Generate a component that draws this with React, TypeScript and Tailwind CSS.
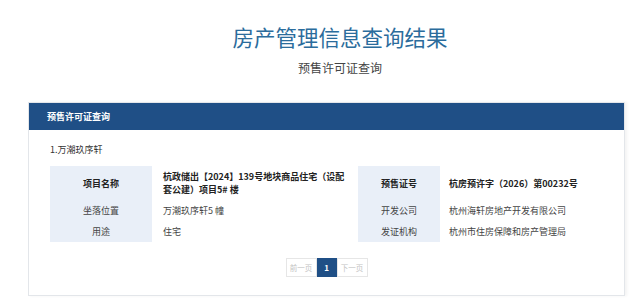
const font = { fontFamily: '"Noto Sans CJK SC", "Noto Sans", sans-serif' };

const rows = [
  {
    l: '项目名称',
    lv: (
      <>
        杭政储出【2024】139号地块商品住宅（设配
        <br />
        套公建）项目5# 楼
      </>
    ),
    r: '预售证号',
    rv: '杭房预许字（2026）第00232号',
    bold: true,
  },
  { l: '坐落位置', lv: '万潮玖序轩5 幢', r: '开发公司', rv: '杭州海轩房地产开发有限公司', bold: false },
  { l: '用途', lv: '住宅', r: '发证机构', rv: '杭州市住房保障和房产管理局', bold: false },
];

function Label({ children, bold }: { children: React.ReactNode; bold?: boolean }) {
  return (
    <div className={`flex items-center justify-center bg-[#e9eff8] py-[4px] ${bold ? 'font-bold text-[#222]' : 'text-[#444]'}`}>
      {children}
    </div>
  );
}

export default function App() {
  return (
    <div className="h-[298px] w-[640px] overflow-hidden bg-white" style={font}>
      <div className="pl-[40px]">
        <h1 className="mt-[22px] text-center text-[21.5px] leading-[30px] text-[#2b6c9c]">房产管理信息查询结果</h1>
        <div className="mt-[7px] text-center text-[12px] leading-[18px] text-[#444]">预售许可证查询</div>
      </div>

      <div className="ml-[28px] mt-[25px] w-[597px] border border-[#e3e6ea] shadow-[2px_0_3px_rgba(0,0,0,0.05)]">
        <div className="flex h-[27px] items-center bg-[#1f4f86] px-[18px] text-[9px] font-bold text-white">预售许可证查询</div>

        <div className="px-[21px] pb-[18px] pt-[13px] text-[9px] leading-[13px]">
          <div className="text-[#333]">1.万潮玖序轩</div>

          <div className="mt-[10px] grid grid-cols-[102px_206px_82px_1fr]">
            {rows.map((row, i) => (
              <div key={i} className="contents">
                <Label bold={row.bold}>{row.l}</Label>
                <div className={`flex items-center py-[4px] pl-[11px] ${row.bold ? 'font-bold text-[#222]' : 'text-[#444]'}`}>
                  <span>{row.lv}</span>
                </div>
                <Label bold={row.bold}>{row.r}</Label>
                <div className={`flex items-center py-[4px] pl-[9px] ${row.bold ? 'font-bold text-[#222]' : 'text-[#444]'}`}>
                  {row.rv}
                </div>
              </div>
            ))}
          </div>

          <div className="mt-[16px] flex justify-center">
            <div className="flex h-[19px] w-[31px] items-center justify-center border border-[#e6e6e6] text-[7.5px] text-[#c4c4c4]">前一页</div>
            <div className="flex h-[19px] w-[20px] items-center justify-center bg-[#1f4f86] text-[8px] font-bold text-white">1</div>
            <div className="flex h-[19px] w-[31px] items-center justify-center border border-[#e6e6e6] text-[7.5px] text-[#c4c4c4]">下一页</div>
          </div>
        </div>
      </div>
    </div>
  );
}
